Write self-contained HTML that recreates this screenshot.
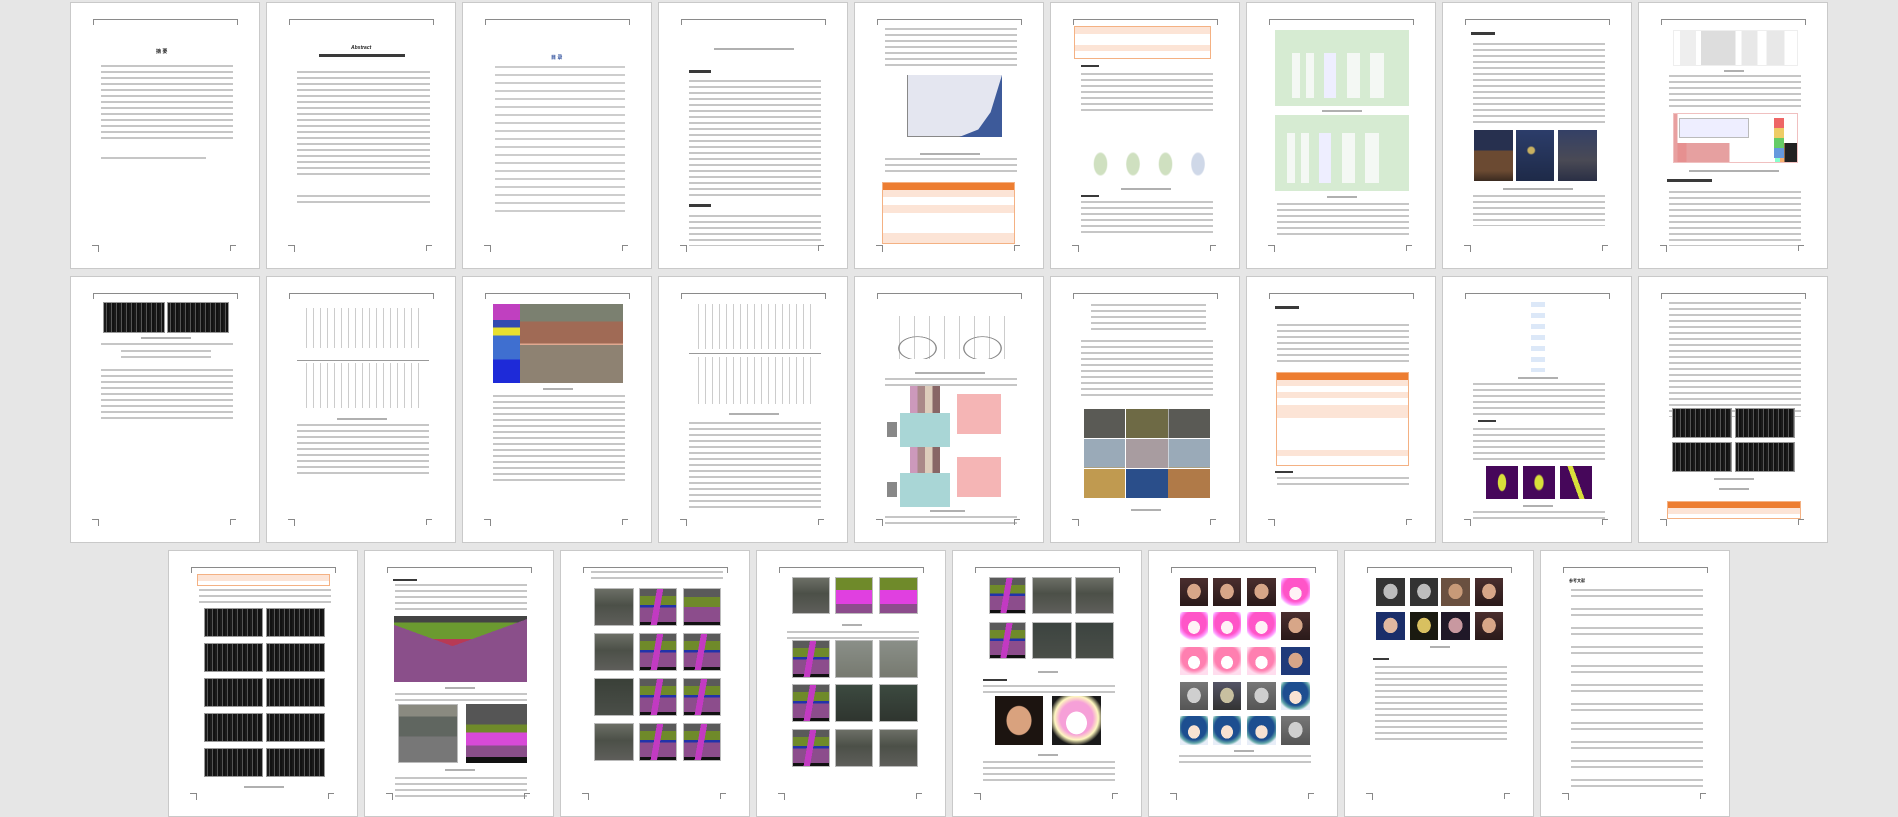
<!DOCTYPE html>
<html><head><meta charset="utf-8"><style>
html,body{margin:0;padding:0}
body{width:1898px;height:797px;background:#e6e6e6;position:relative;overflow:hidden;font-family:"Liberation Sans","Noto Sans CJK SC",sans-serif}
.p{position:absolute;width:190px;height:267px;background:#fff;border:1px solid #c9c9c9;box-sizing:border-box;overflow:hidden}
.p>*{position:absolute;box-sizing:border-box}
.p::before{content:"";position:absolute;left:22px;top:16px;width:143px;height:5px;border:1px solid #8a8a8a;border-bottom:0}
.p::after{content:"";position:absolute;left:21px;top:242px;width:6px;height:6px;border-top:1px solid #888;border-right:1px solid #888}
.br{left:159px;top:242px;width:6px;height:6px;border-top:1px solid #888;border-left:1px solid #888}
.t{background:repeating-linear-gradient(#c6c6c6 0 2px,transparent 2px 6px)}
.t8{background:repeating-linear-gradient(#cdcdcd 0 2px,transparent 2px 8px)}
.rf{background:repeating-linear-gradient(#c6c6c6 0 2px,transparent 2px 6px,#c6c6c6 6px 8px,transparent 8px 19px)}
.b{height:3px;background:#3a3a3a}
.c{height:2px;background:#b0b0b0}
.tt{font-size:5px;font-weight:bold;color:#222;white-space:nowrap;line-height:6px}
.mn{background:repeating-linear-gradient(90deg,#1a1a1a 0 2px,#555 2px 3px,#121212 3px 5px),#222;background-blend-mode:normal;border:1px solid #999}
.mn2{background:repeating-linear-gradient(90deg,#151515 0 2px,#5a5a5a 2px 3px,#101010 3px 5px)}
.tb{border:1px solid #f4b183;background:linear-gradient(#ed7d31 0 7px,#fce4d6 7px 14px,#fff 14px 22px,#fce4d6 22px 30px,#fff 30px 50px,#fce4d6 50px 60px,#fff 60px)}
.tb2{border:1px solid #f4b183;background:linear-gradient(#fce4d6 0 7px,#fff 7px 18px,#fce4d6 18px 24px,#fff 24px)}
.lt{border:1px solid #ddd;background:repeating-linear-gradient(90deg,transparent 0 9px,#d8d8d8 9px 10px)}
.seg{background:linear-gradient(#5a5a5a 0 22%,#6f8a2a 22% 50%,#8c4d8c 50% 92%,#111 92%);border:1px solid #bbb}
.seg2{background:linear-gradient(100deg,transparent 0 40%,#c23ac2 40% 55%,transparent 55%),linear-gradient(#5a5a5a 0 20%,#6f8a2a 20% 45%,#2233aa 45% 52%,#8c4d8c 52% 92%,#111 92%);border:1px solid #bbb}
.ph{background:linear-gradient(#6c6f66 0,#4c5048 45%,#5e5e5a 100%);border:1px solid #bbb}
.fr{background:radial-gradient(ellipse 40% 45% at 50% 48%,#d7a688 0 60%,transparent 62%),linear-gradient(#4a2e2e,#2a1a1a)}
.fa{background:radial-gradient(ellipse 35% 38% at 50% 55%,#fff2f6 0 60%,transparent 62%),radial-gradient(circle at 50% 40%,#ff55c8 0 55%,#f9f 70%,#fff 80%)}
.fb{background:radial-gradient(ellipse 35% 38% at 50% 55%,#f8e2d2 0 60%,transparent 62%),radial-gradient(circle at 50% 40%,#1d4e90 0 55%,#6aa 70%,#e8eef8 80%)}
.fg{background:radial-gradient(ellipse 40% 45% at 50% 48%,#cfcfcf 0 60%,transparent 62%),linear-gradient(#777,#555)}
.fp{background:radial-gradient(ellipse 35% 38% at 50% 55%,#fff 0 60%,transparent 62%),radial-gradient(circle at 50% 40%,#ff7fb0 0 55%,#fde 75%)}
</style></head><body>

<!-- ROW 1 -->
<div class="p" style="left:70px;top:2px">
<div class="tt" style="left:85px;top:46px">摘 要</div>
<div class="t" style="left:30px;top:62px;width:132px;height:74px"></div>
<div class="t" style="left:30px;top:154px;width:105px;height:3px"></div>
<div class="br"></div></div>

<div class="p" style="left:266px;top:2px">
<div class="tt" style="left:84px;top:42px;font-style:italic">Abstract</div>
<div class="b" style="left:52px;top:51px;width:86px;height:3px"></div>
<div class="t" style="left:30px;top:68px;width:133px;height:105px"></div>
<div class="t" style="left:30px;top:192px;width:133px;height:10px"></div>
<div class="br"></div></div>

<div class="p" style="left:462px;top:2px">
<div class="tt" style="left:88px;top:52px;color:#2a4b9a">目 录</div>
<div class="t8" style="left:32px;top:63px;width:130px;height:148px"></div>
<div class="br"></div></div>

<div class="p" style="left:658px;top:2px">
<div class="c" style="left:55px;top:45px;width:80px"></div>
<div class="b" style="left:30px;top:67px;width:22px"></div>
<div class="t" style="left:30px;top:77px;width:132px;height:116px"></div>
<div class="b" style="left:30px;top:201px;width:22px"></div>
<div class="t" style="left:30px;top:212px;width:132px;height:31px"></div>
<div class="br"></div></div>

<div class="p" style="left:854px;top:2px">
<div class="t" style="left:30px;top:25px;width:132px;height:42px"></div>
<div style="left:52px;top:72px;width:95px;height:62px;background:#e4e6f0;border-left:1px solid #888;border-bottom:1px solid #888"></div>
<div style="left:52px;top:72px;width:95px;height:62px;background:#3d5a9a;clip-path:polygon(55% 100%,75% 88%,88% 60%,100% 0,100% 100%)"></div>
<div class="c" style="left:65px;top:150px;width:60px"></div>
<div class="t" style="left:30px;top:155px;width:132px;height:16px"></div>
<div class="tb" style="left:27px;top:179px;width:133px;height:62px"></div>
<div class="br"></div></div>

<div class="p" style="left:1050px;top:2px">
<div class="tb2" style="left:23px;top:23px;width:137px;height:33px"></div>
<div class="b" style="left:30px;top:62px;width:18px;height:2px"></div>
<div class="t" style="left:30px;top:70px;width:132px;height:40px"></div>
<div class="lt" style="left:30px;top:140px;width:130px;height:35px;border:0;background:radial-gradient(ellipse 8% 50% at 15% 60%,#cfe0c0 0 60%,transparent 70%),radial-gradient(ellipse 8% 50% at 40% 60%,#cfe0c0 0 60%,transparent 70%),radial-gradient(ellipse 8% 50% at 65% 60%,#cfe0c0 0 60%,transparent 70%),radial-gradient(ellipse 8% 50% at 90% 60%,#cfd8e8 0 60%,transparent 70%)"></div>
<div class="c" style="left:70px;top:185px;width:50px"></div>
<div class="b" style="left:30px;top:192px;width:18px;height:2px"></div>
<div class="t" style="left:30px;top:198px;width:132px;height:32px"></div>
<div class="br"></div></div>

<div class="p" style="left:1246px;top:2px">
<div style="left:28px;top:27px;width:134px;height:76px;background:#d6ebd2"></div>
<div style="left:45px;top:50px;width:100px;height:45px;background:linear-gradient(90deg,#f4f8f4 0 8%,transparent 8% 14%,#f4f8f4 14% 22%,transparent 22% 32%,#eef 32% 44%,transparent 44% 55%,#f4f8f4 55% 68%,transparent 68% 78%,#f4f8f4 78% 92%,transparent 92%)"></div>
<div class="c" style="left:75px;top:107px;width:40px"></div>
<div style="left:28px;top:112px;width:134px;height:76px;background:#d6ebd2"></div>
<div style="left:40px;top:130px;width:100px;height:50px;background:linear-gradient(90deg,#f4f8f4 0 8%,transparent 8% 14%,#f4f8f4 14% 22%,transparent 22% 32%,#eef 32% 44%,transparent 44% 55%,#f4f8f4 55% 68%,transparent 68% 78%,#f4f8f4 78% 92%,transparent 92%)"></div>
<div class="c" style="left:80px;top:193px;width:30px"></div>
<div class="t" style="left:30px;top:200px;width:132px;height:35px"></div>
<div class="br"></div></div>

<div class="p" style="left:1442px;top:2px">
<div class="b" style="left:28px;top:29px;width:24px"></div>
<div class="t" style="left:30px;top:40px;width:132px;height:84px"></div>
<div style="left:31px;top:127px;width:39px;height:51px;background:linear-gradient(#27304f 0 40%,#6b4a32 40% 80%,#3a2a20)"></div>
<div style="left:73px;top:127px;width:38px;height:51px;background:radial-gradient(circle at 40% 40%,#c8b060 0 8%,transparent 12%),linear-gradient(#2c3d6a,#1e2a48)"></div>
<div style="left:115px;top:127px;width:39px;height:51px;background:linear-gradient(#344066,#4a4a55 60%,#2a2f45)"></div>
<div class="c" style="left:60px;top:185px;width:70px"></div>
<div class="t" style="left:30px;top:192px;width:132px;height:31px"></div>
<div class="br"></div></div>

<div class="p" style="left:1638px;top:2px">
<div style="left:34px;top:27px;width:125px;height:36px;border:1px solid #eee;background:linear-gradient(90deg,transparent 0 5%,#eee 5% 18%,transparent 18% 22%,#ddd 22% 50%,transparent 50% 55%,#e8e8e8 55% 68%,transparent 68% 75%,#e8e8e8 75% 90%,transparent 90%)"></div>
<div class="c" style="left:85px;top:67px;width:20px"></div>
<div class="t" style="left:30px;top:72px;width:132px;height:34px"></div>
<div style="left:34px;top:110px;width:125px;height:50px;border:1px solid #f0c0c0;background:linear-gradient(90deg,#e8a0a0 0 3%,transparent 3%),linear-gradient(#fff 0 60%,transparent 60%),linear-gradient(90deg,#e69090 0 10%,#e6a0a0 10% 45%,#fff 45% 82%,#8fc 82% 86%,#f8b070 86% 90%,#222 90%)"></div>
<div style="left:40px;top:115px;width:70px;height:20px;border:1px solid #bbb;background:#eef"></div>
<div style="left:135px;top:115px;width:10px;height:40px;background:linear-gradient(#e66 0 25%,#ec6 25% 50%,#6c6 50% 75%,#69d 75%)"></div>
<div class="c" style="left:50px;top:167px;width:90px"></div>
<div class="b" style="left:28px;top:176px;width:45px"></div>
<div class="t" style="left:30px;top:188px;width:132px;height:55px"></div>
<div class="br"></div></div>

<!-- ROW 2 -->
<div class="p" style="left:70px;top:276px">
<div class="mn" style="left:32px;top:25px;width:62px;height:31px"></div>
<div class="mn" style="left:96px;top:25px;width:62px;height:31px"></div>
<div class="c" style="left:70px;top:60px;width:50px"></div>
<div class="t" style="left:30px;top:66px;width:132px;height:4px"></div>
<div class="t" style="left:50px;top:73px;width:90px;height:12px"></div>
<div class="t" style="left:30px;top:92px;width:132px;height:52px"></div>
<div class="br"></div></div>

<div class="p" style="left:266px;top:276px">
<div class="lt" style="left:33px;top:31px;width:125px;height:40px;border:0;background:repeating-linear-gradient(90deg,transparent 0 6px,#ccc 6px 7px)"></div>
<div style="left:30px;top:83px;width:132px;height:1px;background:#999"></div>
<div class="lt" style="left:33px;top:86px;width:125px;height:45px;border:0;background:repeating-linear-gradient(90deg,transparent 0 6px,#ccc 6px 7px)"></div>
<div class="c" style="left:70px;top:141px;width:50px"></div>
<div class="t" style="left:30px;top:147px;width:132px;height:54px"></div>
<div class="br"></div></div>

<div class="p" style="left:462px;top:276px">
<div style="left:30px;top:27px;width:27px;height:79px;background:linear-gradient(#c040c0 0 20%,#334ab0 20% 30%,#e8e030 30% 40%,#3f6fd0 40% 70%,#1e2ad8 70%)"></div>
<div style="left:57px;top:27px;width:103px;height:79px;background:linear-gradient(#7b8070 0 22%,#a06a55 22% 50%,#e0a890 50% 52%,#8e8272 52%)"></div>
<div class="c" style="left:80px;top:111px;width:30px"></div>
<div class="t" style="left:30px;top:118px;width:132px;height:88px"></div>
<div class="br"></div></div>

<div class="p" style="left:658px;top:276px">
<div style="left:33px;top:27px;width:125px;height:45px;background:repeating-linear-gradient(90deg,transparent 0 6px,#ccc 6px 7px)"></div>
<div style="left:30px;top:76px;width:132px;height:1px;background:#999"></div>
<div style="left:33px;top:80px;width:125px;height:47px;background:repeating-linear-gradient(90deg,transparent 0 6px,#ccc 6px 7px)"></div>
<div class="c" style="left:70px;top:136px;width:50px"></div>
<div class="t" style="left:30px;top:145px;width:132px;height:90px"></div>
<div class="br"></div></div>

<div class="p" style="left:854px;top:276px">
<div style="left:30px;top:38px;width:130px;height:44px;border-top:1px solid #fff;background:radial-gradient(ellipse 16% 30% at 25% 75%,transparent 0 85%,#888 88% 92%,transparent 94%),radial-gradient(ellipse 16% 30% at 75% 75%,transparent 0 85%,#888 88% 92%,transparent 94%),repeating-linear-gradient(90deg,transparent 0 14px,#ccc 14px 15px)"></div>
<div class="c" style="left:60px;top:95px;width:70px"></div>
<div class="t" style="left:30px;top:101px;width:132px;height:10px"></div>
<div style="left:55px;top:109px;width:30px;height:40px;background:linear-gradient(90deg,#c9b 0 25%,#a88 25% 50%,#dcb 50% 75%,#866 75%)"></div>
<div style="left:45px;top:136px;width:50px;height:34px;background:#a9d6d6"></div>
<div style="left:102px;top:117px;width:44px;height:40px;background:#f5b5b5"></div>
<div style="left:32px;top:145px;width:10px;height:15px;background:#888"></div>
<div style="left:55px;top:170px;width:30px;height:40px;background:linear-gradient(90deg,#c9b 0 25%,#a88 25% 50%,#dcb 50% 75%,#866 75%)"></div>
<div style="left:45px;top:196px;width:50px;height:34px;background:#a9d6d6"></div>
<div style="left:102px;top:180px;width:44px;height:40px;background:#f5b5b5"></div>
<div style="left:32px;top:205px;width:10px;height:15px;background:#888"></div>
<div class="c" style="left:75px;top:233px;width:35px"></div>
<div class="t" style="left:30px;top:239px;width:132px;height:8px"></div>
<div class="br"></div></div>

<div class="p" style="left:1050px;top:276px">
<div class="t" style="left:40px;top:27px;width:115px;height:30px"></div>
<div class="t" style="left:30px;top:63px;width:132px;height:58px"></div>
<div style="left:33px;top:132px;width:126px;height:89px;background:
linear-gradient(90deg,transparent 0 32.5%,#fff 32.5% 33.5%,transparent 33.5% 66%,#fff 66% 67%,transparent 67%),
linear-gradient(#fff 0 0) 0 29px/100% 1px no-repeat,
linear-gradient(#fff 0 0) 0 59px/100% 1px no-repeat,
linear-gradient(#5a5a55 0 33%,#9aaab8 33% 66%,#c09a50 66%)"></div>
<div style="left:75px;top:162px;width:42px;height:29px;background:#a89ca0"></div>
<div style="left:75px;top:192px;width:42px;height:29px;background:#2a4e8a"></div>
<div style="left:117px;top:192px;width:42px;height:29px;background:#b07a48"></div>
<div style="left:75px;top:132px;width:42px;height:29px;background:#6e6a45"></div>
<div class="c" style="left:80px;top:232px;width:30px"></div>
<div class="br"></div></div>

<div class="p" style="left:1246px;top:276px">
<div class="b" style="left:28px;top:29px;width:24px"></div>
<div class="t" style="left:30px;top:47px;width:132px;height:42px"></div>
<div class="tb" style="left:29px;top:95px;width:133px;height:94px;background:linear-gradient(#ed7d31 0 7px,#fce4d6 7px 13px,#fff 13px 19px,#fce4d6 19px 25px,#fff 25px 32px,#fce4d6 32px 45px,#fff 45px 77px,#fce4d6 77px 83px,#fff 83px)"></div>
<div class="b" style="left:28px;top:194px;width:18px;height:2px"></div>
<div class="t" style="left:30px;top:200px;width:132px;height:10px"></div>
<div class="br"></div></div>

<div class="p" style="left:1442px;top:276px">
<div style="left:88px;top:25px;width:14px;height:70px;background:repeating-linear-gradient(#dce8f8 0 5px,transparent 5px 11px)"></div>
<div class="c" style="left:75px;top:100px;width:40px"></div>
<div class="t" style="left:30px;top:106px;width:132px;height:33px"></div>
<div class="b" style="left:35px;top:143px;width:18px;height:2px"></div>
<div class="t" style="left:30px;top:151px;width:132px;height:33px"></div>
<div style="left:43px;top:189px;width:32px;height:33px;background:radial-gradient(ellipse 20% 40% at 50% 50%,#d8e03a 0 60%,transparent 70%),#46075a"></div>
<div style="left:80px;top:189px;width:32px;height:33px;background:radial-gradient(ellipse 25% 40% at 50% 50%,#d8e03a 0 50%,transparent 65%),#46075a"></div>
<div style="left:117px;top:189px;width:32px;height:33px;background:linear-gradient(70deg,transparent 0 44%,#d8e03a 44% 56%,transparent 56%),#46075a"></div>
<div class="c" style="left:80px;top:228px;width:30px"></div>
<div class="t" style="left:30px;top:234px;width:132px;height:10px"></div>
<div class="br"></div></div>

<div class="p" style="left:1638px;top:276px">
<div class="t" style="left:30px;top:25px;width:132px;height:115px"></div>
<div class="mn" style="left:33px;top:131px;width:60px;height:30px"></div>
<div class="mn" style="left:96px;top:131px;width:60px;height:30px"></div>
<div class="mn" style="left:33px;top:165px;width:60px;height:30px"></div>
<div class="mn" style="left:96px;top:165px;width:60px;height:30px"></div>
<div class="c" style="left:75px;top:201px;width:40px"></div>
<div class="c" style="left:80px;top:211px;width:30px"></div>
<div class="tb" style="left:28px;top:224px;width:134px;height:18px;background:linear-gradient(#ed7d31 0 6px,#fce4d6 6px 12px,#fff 12px)"></div>
<div class="br"></div></div>

<!-- ROW 3 -->
<div class="p" style="left:168px;top:550px">
<div class="tb2" style="left:28px;top:23px;width:133px;height:12px;background:linear-gradient(#fce4d6 0 6px,#fff 6px)"></div>
<div class="t" style="left:30px;top:38px;width:132px;height:16px"></div>
<div class="mn" style="left:35px;top:57px;width:59px;height:29px"></div><div class="mn" style="left:97px;top:57px;width:59px;height:29px"></div>
<div class="mn" style="left:35px;top:92px;width:59px;height:29px"></div><div class="mn" style="left:97px;top:92px;width:59px;height:29px"></div>
<div class="mn" style="left:35px;top:127px;width:59px;height:29px"></div><div class="mn" style="left:97px;top:127px;width:59px;height:29px"></div>
<div class="mn" style="left:35px;top:162px;width:59px;height:29px"></div><div class="mn" style="left:97px;top:162px;width:59px;height:29px"></div>
<div class="mn" style="left:35px;top:197px;width:59px;height:29px"></div><div class="mn" style="left:97px;top:197px;width:59px;height:29px"></div>
<div class="c" style="left:75px;top:235px;width:40px"></div>
<div class="br"></div></div>

<div class="p" style="left:364px;top:550px">
<div class="b" style="left:28px;top:28px;width:24px;height:2px"></div>
<div class="t" style="left:30px;top:33px;width:132px;height:30px"></div>
<div style="left:29px;top:65px;width:133px;height:66px;background:linear-gradient(160deg,transparent 0 45%,#8a4f8a 45%),linear-gradient(20deg,#8a4f8a 0 50%,transparent 50%),linear-gradient(#444 0 10%,#6b9a30 10% 35%,#b83a55 35% 50%,#6a6a40 50%)"></div>
<div class="c" style="left:80px;top:136px;width:30px"></div>
<div class="t" style="left:30px;top:142px;width:132px;height:10px"></div>
<div class="ph" style="left:33px;top:153px;width:60px;height:59px;background:linear-gradient(#8a8a80 0 20%,#606660 20% 55%,#777 55%)"></div>
<div style="left:101px;top:153px;width:61px;height:59px;background:linear-gradient(#555 0 35%,#6f8a2a 35% 48%,#d84ad8 48% 70%,#8a4f8a 70% 90%,#111 90%)"></div>
<div class="c" style="left:80px;top:218px;width:30px"></div>
<div class="t" style="left:30px;top:226px;width:132px;height:20px"></div>
<div class="br"></div></div>

<div class="p" style="left:560px;top:550px">
<div class="t" style="left:30px;top:20px;width:132px;height:12px"></div>
<div class="ph" style="left:33px;top:37px;width:40px;height:38px"></div><div class="seg2" style="left:78px;top:37px;width:38px;height:38px"></div><div class="seg" style="left:122px;top:37px;width:38px;height:38px"></div>
<div class="ph" style="left:33px;top:82px;width:40px;height:38px"></div><div class="seg2" style="left:78px;top:82px;width:38px;height:38px"></div><div class="seg2" style="left:122px;top:82px;width:38px;height:38px"></div>
<div class="ph" style="left:33px;top:127px;width:40px;height:38px;background:linear-gradient(#3a4038,#4a4e48)"></div><div class="seg2" style="left:78px;top:127px;width:38px;height:38px"></div><div class="seg2" style="left:122px;top:127px;width:38px;height:38px"></div>
<div class="ph" style="left:33px;top:172px;width:40px;height:38px"></div><div class="seg2" style="left:78px;top:172px;width:38px;height:38px"></div><div class="seg2" style="left:122px;top:172px;width:38px;height:38px"></div>
<div class="br"></div></div>

<div class="p" style="left:756px;top:550px">
<div class="ph" style="left:35px;top:26px;width:38px;height:37px"></div><div class="seg2" style="left:78px;top:26px;width:38px;height:37px;background:linear-gradient(#6f8a2a 0 35%,#e040e0 35% 75%,#8c4d8c 75%)"></div><div class="seg2" style="left:122px;top:26px;width:39px;height:37px;background:linear-gradient(#6f8a2a 0 35%,#e040e0 35% 75%,#8c4d8c 75%)"></div>
<div class="c" style="left:85px;top:73px;width:20px"></div>
<div class="t" style="left:30px;top:80px;width:132px;height:10px"></div>
<div class="seg2" style="left:35px;top:89px;width:38px;height:38px"></div><div class="ph" style="left:78px;top:89px;width:38px;height:38px;background:linear-gradient(#8a8f88,#777a70)"></div><div class="ph" style="left:122px;top:89px;width:39px;height:38px;background:linear-gradient(#8a8f88,#777a70)"></div>
<div class="seg2" style="left:35px;top:133px;width:38px;height:38px"></div><div class="ph" style="left:78px;top:133px;width:38px;height:38px;background:linear-gradient(#3c4a40,#2f352f)"></div><div class="ph" style="left:122px;top:133px;width:39px;height:38px;background:linear-gradient(#3c4a40,#2f352f)"></div>
<div class="seg2" style="left:35px;top:178px;width:38px;height:38px"></div><div class="ph" style="left:78px;top:178px;width:38px;height:38px"></div><div class="ph" style="left:122px;top:178px;width:39px;height:38px"></div>
<div class="br"></div></div>

<div class="p" style="left:952px;top:550px">
<div class="seg2" style="left:36px;top:26px;width:37px;height:37px"></div><div class="ph" style="left:79px;top:26px;width:40px;height:37px"></div><div class="ph" style="left:122px;top:26px;width:39px;height:37px"></div>
<div class="seg2" style="left:36px;top:71px;width:37px;height:37px"></div><div class="ph" style="left:79px;top:71px;width:40px;height:37px;background:linear-gradient(#3c4440,#4a4e48)"></div><div class="ph" style="left:122px;top:71px;width:39px;height:37px;background:linear-gradient(#3c4440,#4a4e48)"></div>
<div class="c" style="left:85px;top:120px;width:20px"></div>
<div class="b" style="left:30px;top:128px;width:24px;height:2px"></div>
<div class="t" style="left:30px;top:134px;width:132px;height:10px"></div>
<div class="fr" style="left:42px;top:145px;width:48px;height:49px;background:radial-gradient(ellipse 42% 48% at 50% 50%,#d9a27e 0 60%,transparent 64%),#1c1410"></div>
<div class="fa" style="left:99px;top:145px;width:49px;height:49px;background:radial-gradient(ellipse 35% 38% at 50% 55%,#fff 0 60%,transparent 62%),radial-gradient(circle at 50% 45%,#f6a0d8 0 45%,#fff8c0 60%,#1a1a1a 75%)"></div>
<div class="c" style="left:85px;top:203px;width:20px"></div>
<div class="t" style="left:30px;top:210px;width:132px;height:22px"></div>
<div class="br"></div></div>

<div class="p" style="left:1148px;top:550px">
<div class="fr" style="left:31px;top:27px;width:28px;height:28px"></div><div class="fr" style="left:64px;top:27px;width:28px;height:28px"></div><div class="fr" style="left:98px;top:27px;width:29px;height:28px"></div><div class="fa" style="left:132px;top:27px;width:29px;height:28px"></div>
<div class="fa" style="left:31px;top:61px;width:28px;height:28px"></div><div class="fa" style="left:64px;top:61px;width:28px;height:28px"></div><div class="fa" style="left:98px;top:61px;width:29px;height:28px"></div><div class="fr" style="left:132px;top:61px;width:29px;height:28px"></div>
<div class="fp" style="left:31px;top:96px;width:28px;height:28px"></div><div class="fp" style="left:64px;top:96px;width:28px;height:28px"></div><div class="fp" style="left:98px;top:96px;width:29px;height:28px"></div><div class="fr" style="left:132px;top:96px;width:29px;height:28px;background:radial-gradient(ellipse 40% 45% at 50% 48%,#d7a688 0 60%,transparent 62%),#1f3a7a"></div>
<div class="fg" style="left:31px;top:131px;width:28px;height:28px"></div><div class="fg" style="left:64px;top:131px;width:28px;height:28px;background:radial-gradient(ellipse 40% 45% at 50% 48%,#c8c0a0 0 60%,transparent 62%),linear-gradient(#556,#333)"></div><div class="fg" style="left:98px;top:131px;width:29px;height:28px"></div><div class="fb" style="left:132px;top:131px;width:29px;height:28px"></div>
<div class="fb" style="left:31px;top:165px;width:28px;height:29px"></div><div class="fb" style="left:64px;top:165px;width:28px;height:29px"></div><div class="fb" style="left:98px;top:165px;width:29px;height:29px"></div><div class="fg" style="left:132px;top:165px;width:29px;height:29px"></div>
<div class="c" style="left:85px;top:199px;width:20px"></div>
<div class="t" style="left:30px;top:204px;width:132px;height:10px"></div>
<div class="br"></div></div>

<div class="p" style="left:1344px;top:550px">
<div class="fg" style="left:31px;top:27px;width:29px;height:28px;background:radial-gradient(ellipse 40% 45% at 50% 48%,#bdbdbd 0 60%,transparent 62%),#333"></div><div class="fg" style="left:65px;top:27px;width:28px;height:28px;background:radial-gradient(ellipse 40% 45% at 50% 48%,#bdbdbd 0 60%,transparent 62%),#333"></div><div class="fr" style="left:96px;top:27px;width:29px;height:28px;background:radial-gradient(ellipse 40% 45% at 50% 48%,#c89a78 0 60%,transparent 62%),#6a5040"></div><div class="fr" style="left:130px;top:27px;width:28px;height:28px"></div>
<div class="fr" style="left:31px;top:61px;width:29px;height:28px;background:radial-gradient(ellipse 40% 45% at 50% 48%,#e0b8a0 0 60%,transparent 62%),#1a2e6a"></div><div class="fr" style="left:65px;top:61px;width:28px;height:28px;background:radial-gradient(ellipse 40% 45% at 50% 48%,#d8c060 0 60%,transparent 62%),#1a1a10"></div><div class="fr" style="left:96px;top:61px;width:29px;height:28px;background:radial-gradient(ellipse 40% 45% at 50% 48%,#c898a0 0 60%,transparent 62%),#201828"></div><div class="fr" style="left:130px;top:61px;width:28px;height:28px"></div>
<div class="c" style="left:85px;top:95px;width:20px"></div>
<div class="b" style="left:28px;top:107px;width:16px;height:2px"></div>
<div class="t" style="left:30px;top:115px;width:132px;height:75px"></div>
<div class="br"></div></div>

<div class="p" style="left:1540px;top:550px">
<div class="tt" style="left:28px;top:27px;font-size:4px">参考文献</div>
<div class="rf" style="left:30px;top:38px;width:132px;height:205px"></div>
<div class="br"></div></div>

</body></html>
